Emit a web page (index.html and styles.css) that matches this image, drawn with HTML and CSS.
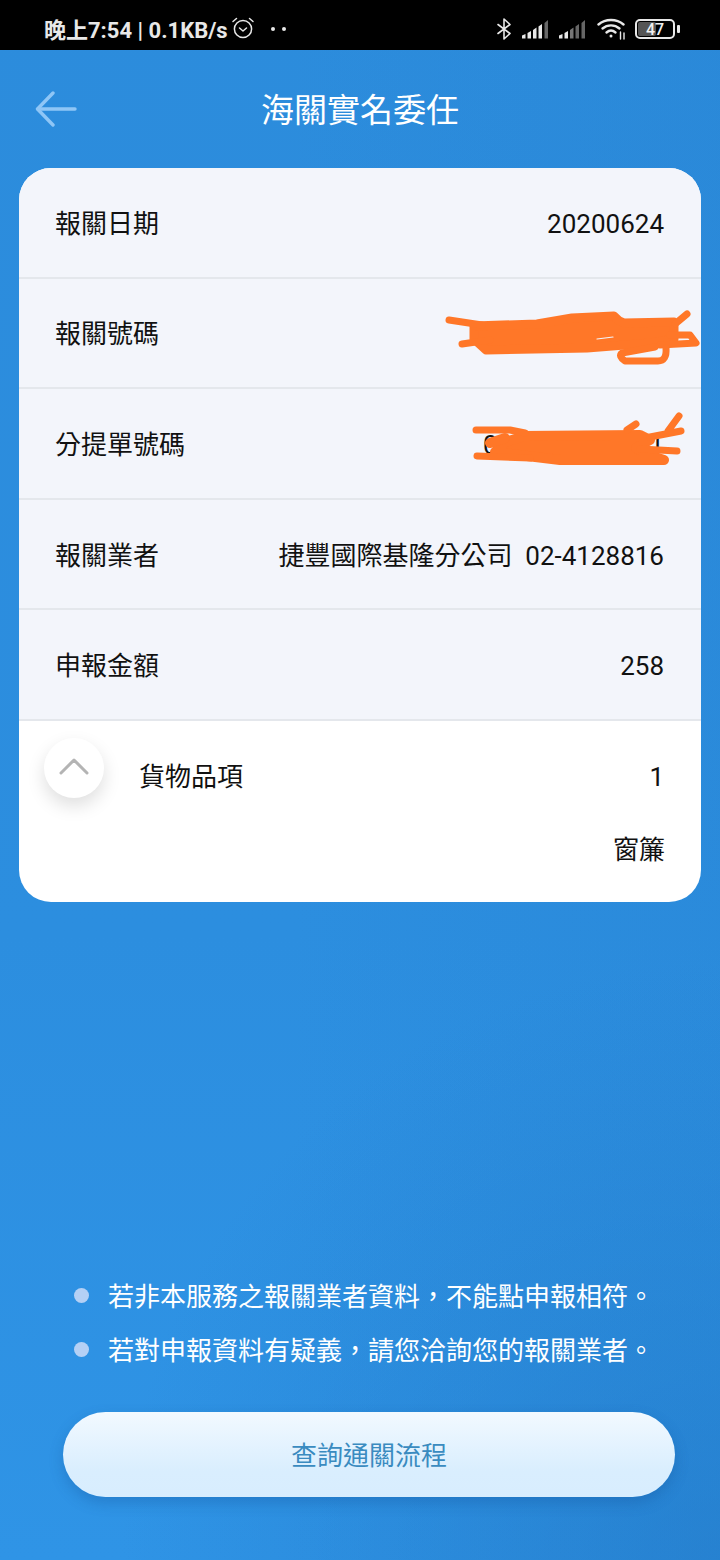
FILE: index.html
```html
<!DOCTYPE html>
<html>
<head>
  <title>海關實名委任</title>
  <link rel="stylesheet" href="styles.css">
</head>
<body>
  <div class="page">
    <div class="status-bar">
      <div class="status-left">
        <span class="status-text">晚上7:54 | 0.1KB/s</span>
        <svg class="alarm" width="24" height="24" viewBox="0 0 24 24" fill="none" stroke="#e8e8e8" stroke-width="1.5" stroke-linecap="round" stroke-linejoin="round">
          <circle cx="12" cy="13" r="8.6"/>
          <path d="M8.5 12l3.5 3 3.500-3"/>
          <path d="M2 5.500l3.500-3M22 5.500l-3.500-3"/>
        </svg>
        <span class="dots"><i></i><i></i></span>
      </div>
      <div class="status-right">
        <svg width="16" height="22" viewBox="0 0 16 22" fill="none" stroke="#e8e8e8" stroke-width="1.6" stroke-linejoin="round" stroke-linecap="round">
          <path d="M2 6.500l12 9-6 5.500V1l6 5.500-12 9"/>
        </svg>
        <svg class="signal" width="27" height="20" viewBox="0 0 27 20">
          <path d="M0 16.500l3.500-1.500v4.500H0z" fill="#e8e8e8"/>
          <path d="M5.500 14l3.500-2v7.500H5.500z" fill="#e8e8e8"/>
          <path d="M11 11l3.500-2.500v11H11z" fill="#e8e8e8"/>
          <path d="M16.500 7.500L20 5v14.500h-3.500z" fill="#e8e8e8"/>
          <path d="M22.500 4L26 1v18.500h-3.500z" fill="#666"/>
        </svg>
        <svg class="signal" width="27" height="20" viewBox="0 0 27 20">
          <path d="M0 16.500l3.500-1.500v4.500H0z" fill="#e8e8e8"/>
          <path d="M5.500 14l3.500-2v7.500H5.500z" fill="#e8e8e8"/>
          <path d="M11 11l3.500-2.500v11H11z" fill="#777"/>
          <path d="M16.500 7.500L20 5v14.500h-3.500z" fill="#666"/>
          <path d="M22.500 4L26 1v18.500h-3.500z" fill="#666"/>
        </svg>
        <svg class="wifi" width="29" height="22" viewBox="0 0 29 22" fill="none" stroke="#e8e8e8" stroke-width="2.400" stroke-linecap="round">
          <path d="M1.500 6.500c7-6 18-6 25 0"/>
          <path d="M5.500 10.500c4.800-4.200 12.200-4.200 17 0"/>
          <path d="M9.500 14.500c2.800-2.400 6.200-2.400 9 0"/>
          <circle cx="14" cy="18" r="1.500" fill="#e8e8e8" stroke="none"/>
          <path d="M23.500 14v7M27 15v6" stroke-width="1.400"/>
        </svg>
        <div class="battery">
          <div class="battery-body"><div class="battery-level"></div><span>47</span></div>
          <div class="battery-tip"></div>
        </div>
      </div>
    </div>

    <div class="header">
      <svg class="back" width="42" height="36" viewBox="0 0 42 36" fill="none" stroke="#8fc6f6" stroke-width="3.400" stroke-linecap="round" stroke-linejoin="round">
        <path d="M40 18H3"/>
        <path d="M18 2L2.500 18 18 34"/>
      </svg>
      <h1>海關實名委任</h1>
    </div>

    <div class="card">
      <div class="row">
        <span class="label">報關日期</span>
        <span class="value">20200624</span>
      </div>
      <div class="row">
        <span class="label">報關號碼</span>
        <svg class="scribble" viewBox="441 278 260 110" fill="#ff7728" stroke="#ff7728" stroke-linecap="round" stroke-linejoin="round">
          <path d="M474 325L537 323Q555 320 572 317L614 315Q618 320 624 322L674 321 674 338 650 342 587 347 486 349 474 338z" stroke-width="9"/>
          <path d="M449 319L482 324" stroke-width="7" fill="none"/>
          <path d="M462 343L490 339" stroke-width="7" fill="none"/>
          <path d="M675 323L687 313" stroke-width="7" fill="none"/>
          <path d="M670 334L690 334 696 342 660 344" stroke-width="7" fill="none"/>
          <path d="M666 347Q667 360 658 360L625 360Q618 355 622 352L655 346" stroke-width="7" fill="none"/>
          <path d="M597 338L613 336" stroke="#f3f5fb" stroke-width="1.200" fill="none"/>
        </svg>
      </div>
      <div class="row">
        <span class="label">分提單號碼</span>
        <span class="value masked"><span>0</span><span>1</span></span>
        <svg class="scribble" viewBox="441 389 260 110" fill="#ff7728" stroke="#ff7728" stroke-linecap="round" stroke-linejoin="round">
          <path d="M525 436L640 435 650 440 636 448 652 456 664 460 560 460 495 452 505 442z" stroke-width="10"/>
          <path d="M476 430L510 430 525 433" stroke-width="7" fill="none"/>
          <path d="M490 443L505 438" stroke-width="10" fill="none"/>
          <path d="M477 456L530 458" stroke-width="7" fill="none"/>
          <path d="M627 430L636 424" stroke-width="7" fill="none"/>
          <path d="M650 437L681 431M668 431L679 416" stroke-width="7" fill="none"/>
          <path d="M640 449L677 451" stroke-width="7" fill="none"/>
        </svg>
      </div>
      <div class="row">
        <span class="label">報關業者</span>
        <span class="value mixed">捷豐國際基隆分公司&nbsp; 02-4128816</span>
      </div>
      <div class="row">
        <span class="label">申報金額</span>
        <span class="value">258</span>
      </div>
      <div class="goods">
        <div class="toggle">
          <svg width="30" height="18" viewBox="0 0 30 18" fill="none" stroke="#b4b4b4" stroke-width="3" stroke-linecap="round" stroke-linejoin="round">
            <path d="M2 16L15 3l13 13"/>
          </svg>
        </div>
        <div class="goods-row">
          <span class="label">貨物品項</span>
          <span class="value">1</span>
        </div>
        <div class="goods-name">窗簾</div>
      </div>
    </div>

    <ul class="notes">
      <li>若非本服務之報關業者資料，不能點申報相符。</li>
      <li>若對申報資料有疑義，請您洽詢您的報關業者。</li>
    </ul>

    <button class="btn">查詢通關流程</button>
  </div>
</body>
</html>
```

FILE: styles.css
```css
html,
body {
  margin: 0;
  padding: 0;
}

body {
  font-family: Roboto, "Noto Sans CJK TC", sans-serif;
  color: #111;
}

.page {
  display: flex;
  flex-direction: column;
  height: 1560px;
  overflow: hidden;
  background:
    radial-gradient(circle at 100% 100%, rgba(33, 118, 195, 0.55) 0, rgba(33, 118, 195, 0) 600px),
    linear-gradient(90deg, rgba(33, 118, 195, 0) 40%, rgba(33, 118, 195, 0.14) 100%),
    linear-gradient(180deg, #2c8cdc 0%, #2c8edf 60%, #2f94e6 100%);
}

.status-bar {
  display: flex;
  justify-content: space-between;
  align-items: center;
  box-sizing: border-box;
  height: 50px;
  padding: 8px 40px 0 44px;
  background-color: #000;
  color: #e8e8e8;
}

.status-left,
.status-right {
  display: flex;
  align-items: center;
}

.status-text {
  padding-bottom: 3px;
  font-size: 22px;
  font-weight: 700;
  white-space: nowrap;
}

.alarm {
  margin: 0 0 2px 3px;
}

.dots {
  display: flex;
  gap: 7px;
  margin-left: 16px;
}

.dots i {
  width: 4px;
  height: 4px;
  border-radius: 50%;
  background-color: #e8e8e8;
}

.signal {
  margin-left: 10px;
}

.wifi {
  margin-left: 11px;
}

.battery {
  display: flex;
  align-items: center;
  margin-left: 9px;
}

.battery-body {
  position: relative;
  display: flex;
  align-items: center;
  justify-content: center;
  width: 36px;
  height: 16px;
  border: 2px solid #e8e8e8;
  border-radius: 5px;
}

.battery-level {
  position: absolute;
  left: 1px;
  top: 1px;
  bottom: 1px;
  width: 18px;
  background-color: #555;
  border-radius: 2px;
}

.battery-body span {
  position: relative;
  font-size: 16px;
  font-weight: 500;
  color: #f0f0f0;
}

.battery-tip {
  width: 3px;
  height: 8px;
  margin-left: 2px;
  border-radius: 1px;
  background-color: #e8e8e8;
}

.header {
  position: relative;
  display: flex;
  justify-content: center;
  align-items: center;
  box-sizing: border-box;
  height: 118px;
  padding-bottom: 2px;
}

.back {
  position: absolute;
  left: 35px;
  top: 41px;
}

h1 {
  margin: 0;
  font-size: 33px;
  font-weight: 400;
  color: #fff;
}

.card {
  margin: 0 19px;
  border-radius: 32px;
  background-color: #fff;
  overflow: hidden;
}

.row {
  position: relative;
  display: flex;
  justify-content: space-between;
  align-items: center;
  box-sizing: border-box;
  height: 110.6px;
  padding: 0 37px;
  background-color: #f3f5fb;
  border-bottom: 2px solid #e4e7ec;
  font-size: 26px;
}

.label {
  margin-left: -1px;
  padding-bottom: 2px;
}

.value {
  padding-top: 3px;
  white-space: nowrap;
}

.value.mixed {
  padding: 0 0 1px;
}

.masked {
  display: flex;
  justify-content: space-between;
  width: 181px;
}

.scribble {
  position: absolute;
  right: 0;
  top: 0;
  width: 260px;
  height: 110px;
}

.goods {
  position: relative;
  height: 181px;
  font-size: 26px;
}

.toggle {
  position: absolute;
  left: 25px;
  top: 17px;
  display: flex;
  align-items: center;
  justify-content: center;
  width: 60px;
  height: 60px;
  border-radius: 50%;
  background-color: #fff;
  box-shadow: 0 8px 18px rgba(0, 0, 0, 0.13);
}

.toggle svg {
  margin-top: -3px;
}

.goods-row {
  display: flex;
  justify-content: space-between;
  align-items: center;
  height: 110px;
  padding: 0 37px 0 121px;
}

.goods-name {
  margin-top: -2px;
  padding-right: 36px;
  text-align: right;
}

.notes {
  margin: auto 0 0;
  padding: 0 0 2px 74px;
  list-style: none;
  color: #fff;
  font-size: 26px;
}

.notes li {
  display: flex;
  align-items: center;
  gap: 19px;
  height: 54px;
  white-space: nowrap;
}

.notes li::before {
  content: "";
  flex: none;
  width: 15px;
  height: 15px;
  margin-top: 2px;
  border-radius: 50%;
  background-color: #b4d0f5;
}

.btn {
  flex: none;
  width: 612px;
  height: 85px;
  margin: 35px 0 63px 63px;
  padding: 0 0 2px;
  border: none;
  border-radius: 43px;
  background: linear-gradient(180deg, #f2f9ff 0%, #d9eefe 70%, #d8edfe 100%);
  box-shadow: 0 6px 14px rgba(20, 80, 150, 0.3);
  color: #3a8bc0;
  font-family: inherit;
  font-size: 26px;
}
```
